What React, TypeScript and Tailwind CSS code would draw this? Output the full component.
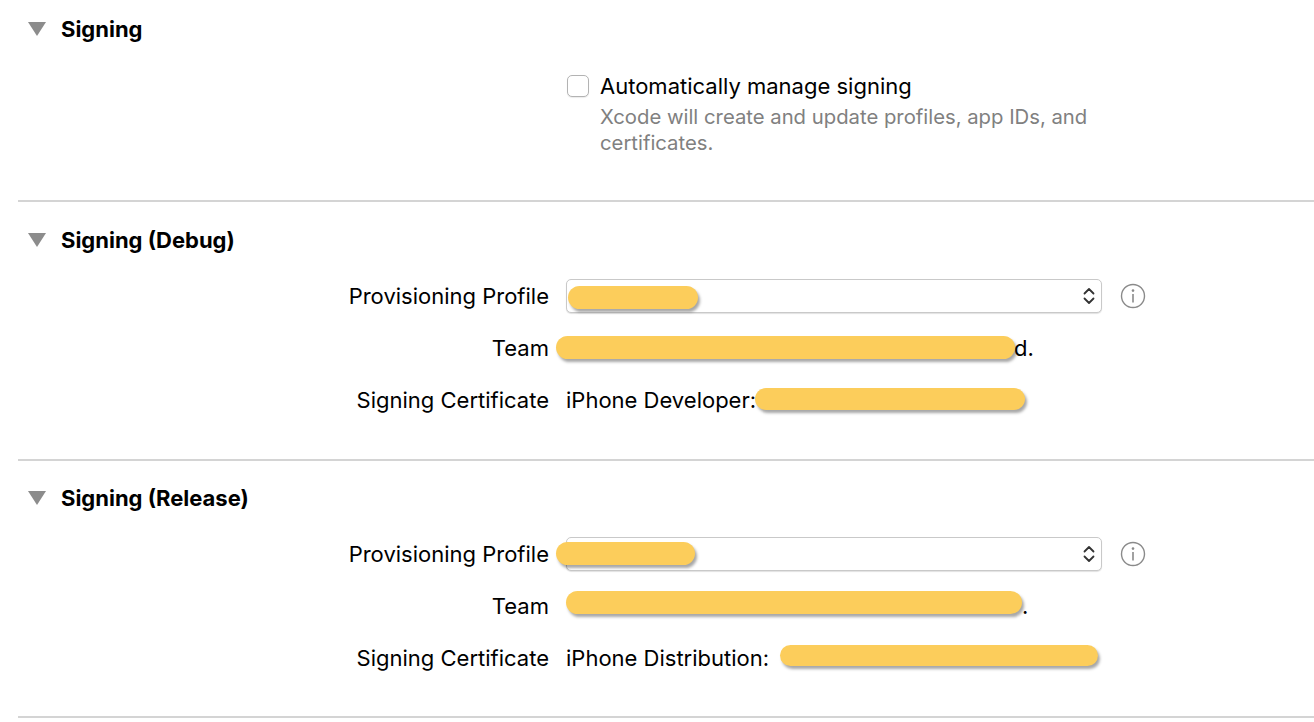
import type { ReactNode } from 'react';

const font = { fontFamily: 'Inter, "Liberation Sans", Arial, sans-serif' };

const Redact = ({ className }: { className: string }) => (
  <span
    className={`absolute rounded-full bg-[#fccd5b] shadow-[2px_3px_3px_rgba(0,0,0,0.35)] ${className}`}
  />
);

const Triangle = () => (
  <svg width="18" height="14" viewBox="0 0 18 14" className="shrink-0">
    <path d="M0 0 H18 L9 14 Z" fill="#8c8c8c" />
  </svg>
);

const Chevrons = () => (
  <svg width="12" height="20" viewBox="0 0 12 20" fill="none" stroke="#333" strokeWidth="1.8" strokeLinecap="round" strokeLinejoin="round">
    <path d="M1.5 7.5 L6 3 L10.5 7.5" />
    <path d="M1.5 12.5 L6 17 L10.5 12.5" />
  </svg>
);

const InfoIcon = () => (
  <svg width="26" height="26" viewBox="0 0 26 26" fill="none">
    <circle cx="13" cy="13" r="11.5" stroke="#8a8a8a" strokeWidth="1.4" />
    <circle cx="13" cy="7.6" r="1.3" fill="#8a8a8a" />
    <path d="M13 11 V19.5" stroke="#8a8a8a" strokeWidth="1.6" />
  </svg>
);

const SectionHeader = ({ title }: { title: string }) => (
  <div className="flex h-[28px] items-center gap-[15px] pl-[10px]">
    <Triangle />
    <h2 className="text-[22px] font-bold text-black">{title}</h2>
  </div>
);

const Row = ({ label, children }: { label: string; children: ReactNode }) => (
  <div className="flex h-[52px] items-center">
    <div className="w-[531px] shrink-0 text-right text-[22px] text-black">{label}</div>
    <div className="ml-[17px] flex flex-1 items-center">{children}</div>
  </div>
);

const Popup = ({ redact }: { redact: string }) => (
  <div className="flex items-center">
    <div className="relative flex h-[34px] w-[536px] items-center justify-end rounded-[5px] border border-[#c9c9c9] bg-white pr-[6px] shadow-[0_1px_1px_rgba(0,0,0,0.12)]">
      <Chevrons />
      <Redact className={redact} />
    </div>
    <div className="ml-[18px]">
      <InfoIcon />
    </div>
  </div>
);

const Divider = () => <div className="h-[2px] bg-[#d4d4d4]" />;

const App = () => {
  return (
    <div className="min-h-[722px] w-[1314px] overflow-hidden bg-white pl-[18px]" style={font}>
      <section className="pt-[15px] pb-[44px]">
        <SectionHeader title="Signing" />
        <div className="mt-[30px] flex items-start pl-[549px]">
          <div className="mt-[2px] h-[22px] w-[22px] shrink-0 rounded-[5px] border border-[#b3b3b3] bg-white shadow-[0_1px_1px_rgba(0,0,0,0.08)]" />
          <div className="ml-[11px] leading-[26px]">
            <p className="text-[22px] text-black">Automatically manage signing</p>
            <p className="mt-[5px] text-[20.3px] text-[#808080]">
              Xcode will create and update profiles, app IDs, and
              <br />
              certificates.
            </p>
          </div>
        </div>
      </section>
      <Divider />

      <section className="pt-[24px] pb-[33px]">
        <SectionHeader title="Signing (Debug)" />
        <div className="mt-[16px]">
          <Row label="Provisioning Profile">
            <Popup redact="left-[1px] top-[6px] h-[23px] w-[130px]" />
          </Row>
          <Row label="Team">
            <span className="relative text-[22px] text-black">
              <span className="inline-block w-[448px]" />d.
              <Redact className="-left-[10px] top-[4px] h-[23px] w-[459px]" />
            </span>
          </Row>
          <Row label="Signing Certificate">
            <span className="relative text-[22px] text-black">
              iPhone Developer:<span className="inline-block w-[268px]" />
              <Redact className="left-[189px] top-[4px] h-[22px] w-[270px]" />
            </span>
          </Row>
        </div>
      </section>
      <Divider />

      <section className="pt-[23px] pb-[32px]">
        <SectionHeader title="Signing (Release)" />
        <div className="mt-[16px]">
          <Row label="Provisioning Profile">
            <Popup redact="-left-[11px] top-[4px] h-[23px] w-[139px]" />
          </Row>
          <Row label="Team">
            <span className="relative text-[22px] text-black">
              <span className="inline-block w-[456px]" />.
              <Redact className="left-0 top-[1px] h-[23px] w-[456px]" />
            </span>
          </Row>
          <Row label="Signing Certificate">
            <span className="relative text-[22px] text-black">
              iPhone Distribution: <span className="inline-block w-[318px]" />
              <Redact className="left-[214px] top-[3px] h-[21px] w-[318px]" />
            </span>
          </Row>
        </div>
      </section>
      <Divider />
    </div>
  );
};

export default App;
